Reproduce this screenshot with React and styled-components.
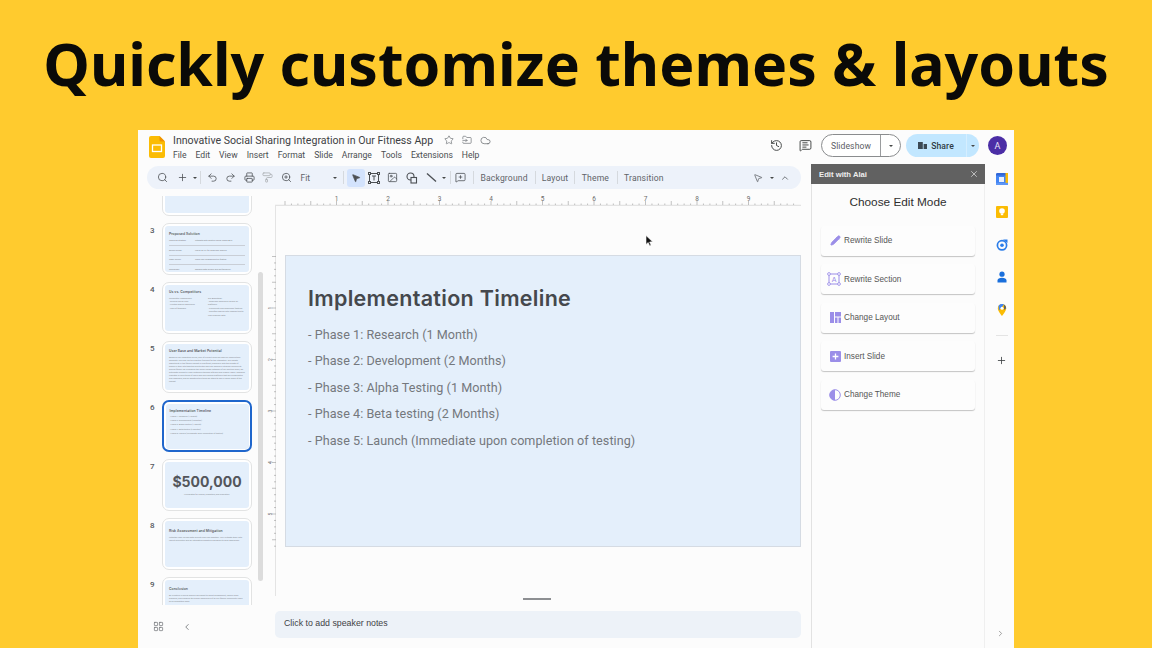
import React from "react";
import styled, { createGlobalStyle } from "styled-components";
import {
  Search, Plus, Undo2, Redo2, Printer, PaintRoller, ZoomIn, MousePointer2, Image as ImageIcon,
  MessageSquarePlus, History, MessageSquareText, Star, FolderInput, Cloud, X, ChevronUp,
  ChevronLeft, ChevronRight, LayoutGrid, Pencil,
} from "lucide-react";

const Global = createGlobalStyle`
  html, body { margin: 0; padding: 0; width: 1152px; height: 648px; overflow: hidden; background: #ffcb2e; }
  * { box-sizing: border-box; }
  body { font-family: "Liberation Sans", Arial, sans-serif; color: #3c4043; }
`;

const Page = styled.div`
  width: 1152px; height: 648px; display: flex; flex-direction: column; align-items: center; background: #ffcb2e;
`;
const Heading = styled.h1`
  margin: 0; height: 130px; line-height: 126px; font-family: "Noto Sans", sans-serif; font-weight: 700;
  font-size: 59px; color: #0a0a08; white-space: nowrap; letter-spacing: 0;
`;
const Window = styled.div`
  width: 876px; height: 518px; background: #fcfcfc; display: grid;
  grid-template-columns: 673px 174px 29px; grid-template-rows: 34px 484px;
`;

/* Header */
const Header = styled.header`
  grid-column: 1 / -1; display: flex; align-items: flex-start; padding: 6px 7px 0 11px;
`;
const Logo = styled.svg` width: 16px; height: 22px; flex: none; margin-right: 8px; `;
const TitleBlock = styled.div` display: flex; flex-direction: column; `;
const TitleRow = styled.div` display: flex; align-items: center; height: 12px; margin-top: -2px; color: #5f6368; `;
const DocTitle = styled.span`
  font-family: "Roboto", sans-serif; font-size: 10.6px; color: #3c4043; margin-right: 11px; white-space: nowrap;
`;
const TitleIcons = styled.div` display: flex; gap: 8px; align-items: center; `;
const MenuBar = styled.nav` display: flex; gap: 9px; margin-top: 4px; `;
const MenuItem = styled.span` font-family: "Roboto", sans-serif; font-size: 8.6px; color: #4a4d50; line-height: 10px; `;
const HeaderRight = styled.div` margin-left: auto; display: flex; align-items: center; height: 23px; margin-top: -2px; `;
const HeaderIcon = styled.span` display: flex; color: #444746; margin-right: ${p => p.$mr}px; `;
const SlideshowPill = styled.div`
  width: 80px; height: 23px; border: 1px solid #8a8c8e; border-radius: 12px; display: flex; background: #fff;
`;
const PillLabel = styled.span`
  flex: 1; display: flex; align-items: center; justify-content: center; font-size: 8.6px; color: #5c6064;
  font-family: "Roboto", sans-serif; gap: 4px; letter-spacing: .1px;
`;
const PillCaret = styled.span`
  width: ${p => p.$w}px; display: flex; align-items: center; justify-content: center; border-left: 1px solid ${p => p.$line};
`;
const SharePill = styled.div`
  width: 73px; height: 23px; border-radius: 12px; background: #c2e7ff; display: flex; margin-left: 5px; color: #1f3a4d;
`;
const ShareLabel = styled(PillLabel)` color: #2f3b44; font-weight: 500; `;
const Avatar = styled.div`
  width: 19px; height: 19px; border-radius: 50%; background: #4b2ea6; color: #e9e4f8; margin-left: 9px;
  display: flex; align-items: center; justify-content: center; font-size: 9px; font-family: "Roboto", sans-serif;
`;
const Caret = styled.i`
  display: block; flex: none; width: 0; height: 0; border-left: 2.5px solid transparent; border-right: 2.5px solid transparent;
  border-top: 2.5px solid #444746;
`;

/* Main */
const Main = styled.main` display: flex; flex-direction: column; padding-top: 2px; min-height: 0; `;
const Toolbar = styled.div`
  margin-left: 9px; width: 654px; height: 23px; border-radius: 12px; background: #edf2fa; display: flex;
  align-items: center; padding: 0 8px 0 5px; flex: none;
`;
const ToolBtn = styled.span`
  width: ${p => p.$w || 18.5}px; height: 18px; flex: none; display: flex; align-items: center; justify-content: center;
  color: ${p => p.$muted ? "#a9adb1" : "#4b4f53"}; border-radius: 3px;
  background: ${p => p.$active ? "#d3e3fd" : "transparent"};
`;
const CaretBtn = styled.span` width: ${p => p.$w || 6}px; flex: none; display: flex; justify-content: center; `;
const ToolSep = styled.span` width: 1px; height: 13px; background: #d5d9de; flex: none; margin: 0 ${p => p.$r ?? 2}px 0 ${p => p.$l ?? 2}px; `;
const FitSelect = styled.span`
  width: 44px; flex: none; display: flex; align-items: center; justify-content: space-between; padding: 0 3px 0 5px;
  font-size: 8.4px; color: #5f6368; font-family: "Roboto", sans-serif;
`;
const TextBtn = styled.span`
  font-family: "Roboto", sans-serif; font-size: 8.6px; color: #5f6368; padding: 0 ${p => p.$px ?? 6.5}px; flex: none; letter-spacing: .15px;
`;
const ToolRight = styled.div` margin-left: auto; display: flex; align-items: center; `;
const Content = styled.div` display: flex; margin-top: 7px; flex: 1; min-height: 0; `;

/* Filmstrip */
const Filmstrip = styled.aside` width: 137px; flex: none; display: flex; flex-direction: column; position: relative; `;
const ThumbScroller = styled.div` height: 409px; overflow: hidden; flex: none; `;
const ThumbList = styled.div` display: flex; flex-direction: column; gap: 7px; margin-top: -32px; padding-left: 12px; `;
const ThumbRow = styled.div` display: flex; height: 52px; `;
const ThumbNumber = styled.span`
  width: 12px; flex: none; font-size: 8px; color: #55585c; font-family: "Roboto", sans-serif; padding-top: 3px; text-align: left; font-weight: 500;
`;
const Thumb = styled.div`
  width: 90px; height: 52px; flex: none; border-radius: 7px; padding: ${p => p.$selected ? "1.5px" : "2px"}; background: #fff;
  border: ${p => p.$selected ? "2px solid #1f66cc" : "1px solid #e2e3e3"}; overflow: hidden;
`;
const ThumbSlide = styled.div`
  height: 100%; background: #e4effb; border-radius: 3px; padding: ${p => p.$pt ?? 5}px ${p => p.$center ? 3 : 4}px 0; overflow: hidden;
  display: flex; flex-direction: column; align-items: ${p => p.$center ? "center" : "stretch"};
`;
const ThumbTitle = styled.div` font-family: "Inter", sans-serif; font-weight: 600; font-size: 3.4px; line-height: 4px; color: #5c5f64; white-space: nowrap; margin-bottom: 2.5px; letter-spacing: .05px; `;
const ThumbLine = styled.div` font-family: "Roboto", sans-serif; font-size: 2.1px; line-height: ${p => p.$lh || 3.4}px; color: #868a90; `;
const ThumbBig = styled.div` font-family: "Inter", sans-serif; font-weight: 700; font-size: 14px; line-height: 22px; color: #53565b; white-space: nowrap; `;
const ThumbCols = styled.div` display: grid; grid-template-columns: 1fr 1fr; gap: 2px; `;
const ThumbTable = styled.div` display: flex; flex-direction: column; margin-top: -2px; `;
const ThumbTableRow = styled.div`
  display: grid; grid-template-columns: 26px 1fr; border-bottom: .5px solid #c9ced6; padding: 2.5px 0 3px; font-family: "Roboto", sans-serif;
  font-size: 2.1px; line-height: 3px; color: #7d8186;
  &:last-child { border-bottom: 0; }
`;
const ThumbBar = styled.div`
  position: absolute; left: 120px; top: 76px; width: 5px; height: 309px; background: #dcdcdc; border-radius: 3px;
`;
const StripFooter = styled.div` height: 43px; flex: none; display: flex; align-items: center; padding: 0 0 0 15px; gap: 18px; color: #5f6368; `;

/* Workspace */
const Workspace = styled.section` width: 526px; flex: none; display: flex; flex-direction: column; margin-top: 1px; `;
const RulerH = styled.svg` display: block; width: 526px; height: 9px; flex: none; overflow: visible; `;
const Stage = styled.div`
  position: relative; height: 390px; flex: none; padding: 49px 0 0 9px; border-left: 1px solid #e4e4e4;
`;
const RulerV = styled.svg` position: absolute; left: -7px; top: 49px; width: 8px; height: 292px; overflow: visible; `;
const Slide = styled.article`
  width: 516px; height: 292px; background: #e4effb; border: 1px solid #d5dbe3; padding: 30px 22px 0;
`;
const SlideTitle = styled.h2`
  margin: 0 0 15px; font-family: "Inter", sans-serif; font-weight: 600; font-size: 21.5px; line-height: 25px; color: #45484d;
  letter-spacing: .3px; white-space: nowrap;
`;
const SlideList = styled.ul` margin: 0; padding: 0; list-style: none; display: flex; flex-direction: column; gap: 8.4px; `;
const SlideLine = styled.li`
  font-family: "Roboto", sans-serif; font-size: 12.6px; line-height: 18px; color: #74787d; white-space: nowrap; letter-spacing: .05px;
`;
const Cursor = styled.svg` position: absolute; left: 369px; top: 29px; width: 9px; height: 12px; `;
const NotesHandle = styled.div` width: 28px; height: 1.5px; background: #8d8f92; margin: 2px auto 0; flex: none; transform: translateX(-1px); `;
const Notes = styled.div`
  height: 27px; margin-top: 11.5px; background: #edf2f8; border-radius: 5px; padding: 0 9px 3px; display: flex; align-items: center;
  font-size: 8.8px; color: #3f4246; flex: none;
`;

/* Panel */
const Panel = styled.section` display: flex; flex-direction: column; border-left: 1px solid #e2e2e2; border-right: 1px solid #efefef; `;
const PanelHead = styled.div`
  height: 20px; background: #616161; color: #eee; display: flex; align-items: center; justify-content: space-between; padding: 0 6px 0 8px;
  font-size: 7.7px; font-weight: 700; margin: 0 -1px 0 -1px; flex: none;
`;
const PanelTitle = styled.div` text-align: center; font-size: 11.8px; color: #2f2f2f; margin-top: 11px; line-height: 14px; `;
const PanelList = styled.div` display: flex; flex-direction: column; gap: 8.5px; padding: 0 9px; margin-top: 16.5px; `;
const ModeCard = styled.div`
  height: 30px; display: flex; align-items: center; padding-left: ${p => p.$pl ?? 9}px; gap: ${p => p.$gap ?? 3}px; background: #fdfdfd; border-radius: 3px;
  box-shadow: 0 1px 1px #c4c4c4; font-size: 8.2px; color: #565656;
`;

/* Rail */
const Rail = styled.aside` display: flex; flex-direction: column; align-items: stretch; padding: 9px 0 0 11px; width: 29px; `;
const RailIcon = styled.svg` width: 12px; height: 12px; display: block; margin-bottom: ${p => p.$mb}px; flex: none; `;
const RailSep = styled.div` width: 12px; height: 1px; background: #e4e4e4; margin: 0 0 19px; flex: none; `;
const RailPlus = styled.span` display: flex; color: #3c4043; `;
const RailBottom = styled.span` margin-top: auto; margin-bottom: 10px; display: flex; color: #777; `;

const slides = [
  { n: null, body: null },
  { n: 3, pt: 6, title: "Proposed Solution", table: [["Technical Strategy","Integrate with existing social media APIs"],["Design Scope","Focus on UX for seamless sharing"],["Team Survey","Track user engagement by feature"],["Challenges","Manage data privacy and performance"]] },
  { n: 4, pt: 5, title: "Us vs. Competitors", cols: [["Competitor Weaknesses:","- Minimal social links","- Limited sharing experience","- Lack of feedback"],["Our Advantage:","- Seamless experience across all platforms","- Community and challenges features","- Gamified sharing with rewards tied to user progress data"]] },
  { n: 5, pt: 5, title: "User Base and Market Potential", para: "Based on our marketing survey, 60% of current users are keen on sharing their workouts. This has led to a positive forecast for the integration. Our growth opportunity in the fitness market is significant, especially with the growth of people in their late twenties and thirties who are seeking a stronger community around fitness. By leveraging the social media networks of our existing users, we anticipate a boost in new customers through referrals and organic reach. Research indicates a rising trend of users who are seeking platforms that are collaborative and rewarding, and by adopting this trend we stand to gain a larger share of the market." },
  { n: 6, pt: 5, selected: true, title: "Implementation Timeline", lines: ["- Phase 1: Research (1 Month)","- Phase 2: Development (2 Months)","- Phase 3: Alpha Testing (1 Month)","- Phase 4: Beta testing (2 Months)","- Phase 5: Launch (Immediate upon completion of testing)"] },
  { n: 7, pt: 9, big: "$500,000", sub: "In allocated for coding, marketing, and promotion." },
  { n: 8, pt: 8, title: "Risk Assessment and Mitigation", para: "Potential risks include data security and user adoption. We'll mitigate them with robust encryption and an integrated marketing campaign to raise awareness." },
  { n: 9, pt: 7, title: "Conclusion", para: "By investing in social sharing we expect to boost engagement, reach a wide audience, and enhance the overall experience of all our fitness community users as a competitive edge." },
];

const ThumbBody = ({ s }) => {
  if (s.big) return (
    <ThumbSlide $center $pt={s.pt}>
      <ThumbBig>{s.big}</ThumbBig>
      <ThumbLine>{s.sub}</ThumbLine>
    </ThumbSlide>
  );
  return (
    <ThumbSlide $pt={s.pt}>
      {s.title && <ThumbTitle>{s.title}</ThumbTitle>}
      {s.table && (
        <ThumbTable>
          {s.table.map(r => (
            <ThumbTableRow key={r[0]}><span>{r[0]}</span><span>{r[1]}</span></ThumbTableRow>
          ))}
        </ThumbTable>
      )}
      {s.cols && (
        <ThumbCols>
          {s.cols.map((c, i) => <div key={i}>{c.map(l => <ThumbLine key={l}>{l}</ThumbLine>)}</div>)}
        </ThumbCols>
      )}
      {s.para && <ThumbLine $lh={3.1}>{s.para}</ThumbLine>}
      {s.lines && s.lines.map(l => <ThumbLine key={l} $lh={4.2}>{l}</ThumbLine>)}
    </ThumbSlide>
  );
};

const hTicks = () => {
  const out = [];
  const step = 51.5 / 8;
  for (let i = 0; i <= 79; i++) {
    const x = 10 + i * step;
    if (x > 524) break;
    const major = i % 4 === 0;
    out.push(<line key={i} x1={x} x2={x} y1={major ? 4 : 6.5} y2={8} stroke="#9a9a9a" strokeWidth=".6" />);
  }
  return out;
};
const vTicks = () => {
  const out = [];
  const step = 51.5 / 8;
  for (let i = 0; i <= 45; i++) {
    const y = 1.5 + i * step;
    const major = i % 4 === 0;
    out.push(<line key={i} y1={y} y2={y} x1={major ? 3 : 5} x2={7} stroke="#9a9a9a" strokeWidth=".6" />);
  }
  return out;
};

const Ic = { size: 11, strokeWidth: 1.7 };
const modeColor = "#9b8ee8";

const RewriteSectionIcon = () => (
  <svg width="14" height="14" viewBox="0 0 14 14" fill="none" stroke={modeColor} strokeWidth="1">
    <rect x="2" y="2" width="10" height="10" />
    <rect x=".7" y=".7" width="2.6" height="2.6" rx="1" fill="#fff" />
    <rect x="10.7" y=".7" width="2.6" height="2.6" rx="1" fill="#fff" />
    <rect x=".7" y="10.7" width="2.6" height="2.6" rx="1" fill="#fff" />
    <rect x="10.7" y="10.7" width="2.6" height="2.6" rx="1" fill="#fff" />
    <text x="7" y="9.6" textAnchor="middle" fontSize="7" fill={modeColor} stroke="none" fontFamily="Liberation Sans">A</text>
  </svg>
);
const LayoutIcon = () => (
  <svg width="11" height="11" viewBox="0 0 11 11" fill={modeColor}>
    <rect x="0" y="0" width="4" height="11" /><rect x="5" y="0" width="6" height="4.5" />
    <rect x="5" y="5.5" width="2.5" height="5.5" /><rect x="8.5" y="5.5" width="2.5" height="5.5" />
  </svg>
);
const InsertIcon = () => (
  <svg width="11" height="11" viewBox="0 0 11 11">
    <rect width="11" height="11" rx="1" fill={modeColor} />
    <path d="M5.5 2.6v5.8M2.6 5.5h5.8" stroke="#fff" strokeWidth="1.3" />
  </svg>
);
const ThemeIcon = () => (
  <svg width="12" height="12" viewBox="0 0 12 12">
    <circle cx="6" cy="6" r="5.3" fill="none" stroke={modeColor} />
    <path d="M6 .7a5.3 5.3 0 0 0 0 10.6z" fill={modeColor} />
  </svg>
);

export default function App() {
  return (
    <Page>
      <Global />
      <Heading>Quickly customize themes &amp; layouts</Heading>
      <Window>
        <Header>
          <Logo viewBox="0 0 16 22">
            <path d="M2 0h8.5L16 5.5V20a2 2 0 0 1-2 2H2a2 2 0 0 1-2-2V2a2 2 0 0 1 2-2z" fill="#fbbc04" />
            <path d="M10.5 0L16 5.5h-4a1.5 1.5 0 0 1-1.5-1.5z" fill="#f09300" />
            <rect x="3.5" y="9" width="9" height="6.5" fill="none" stroke="#fff" strokeWidth="1.3" />
          </Logo>
          <TitleBlock>
            <TitleRow>
              <DocTitle>Innovative Social Sharing Integration in Our Fitness App</DocTitle>
              <TitleIcons>
                <Star size={10} strokeWidth={1.5} />
                <FolderInput size={10} strokeWidth={1.5} />
                <Cloud size={11} strokeWidth={1.5} />
              </TitleIcons>
            </TitleRow>
            <MenuBar>
              {["File","Edit","View","Insert","Format","Slide","Arrange","Tools","Extensions","Help"].map(m => <MenuItem key={m}>{m}</MenuItem>)}
            </MenuBar>
          </TitleBlock>
          <HeaderRight>
            <HeaderIcon $mr={16}><History size={13} strokeWidth={1.8} /></HeaderIcon>
            <HeaderIcon $mr={9}><MessageSquareText size={13} strokeWidth={1.8} /></HeaderIcon>
            <SlideshowPill>
              <PillLabel>Slideshow</PillLabel>
              <PillCaret $w={20} $line="#9a9c9e"><Caret /></PillCaret>
            </SlideshowPill>
            <SharePill>
              <ShareLabel>
                <svg width="9" height="9" viewBox="0 0 9 9" fill="#3c4a55"><path d="M0 1h4.8v7H0zM5.6 3H9v5H5.6z" /></svg>
                Share
              </ShareLabel>
              <PillCaret $w={13} $line="#d5eeff"><Caret /></PillCaret>
            </SharePill>
            <Avatar>A</Avatar>
          </HeaderRight>
        </Header>

        <Main>
          <Toolbar>
            <ToolBtn $w={20}><Search {...Ic} /></ToolBtn>
            <ToolBtn $w={20}><Plus {...Ic} /></ToolBtn>
            <CaretBtn $w={5}><Caret /></CaretBtn>
            <ToolSep $l={3} $r={2} />
            <ToolBtn><Undo2 {...Ic} /></ToolBtn>
            <ToolBtn><Redo2 {...Ic} /></ToolBtn>
            <ToolBtn><Printer {...Ic} /></ToolBtn>
            <ToolBtn $muted><PaintRoller {...Ic} /></ToolBtn>
            <ToolBtn><ZoomIn {...Ic} /></ToolBtn>
            <FitSelect>Fit<Caret /></FitSelect>
            <ToolSep $l={3} $r={3} />
            <ToolBtn $active $w={18}><MousePointer2 size={10} strokeWidth={1.7} fill="#4b4f53" /></ToolBtn>
            <ToolBtn $w={18}>
              <svg width="12" height="12" viewBox="0 0 12 12" fill="none" stroke="#4b4f53" strokeWidth="1">
                <rect x="1.5" y="1.5" width="9" height="9" />
                <rect x=".5" y=".5" width="2" height="2" fill="#edf2fa" /><rect x="9.5" y=".5" width="2" height="2" fill="#edf2fa" />
                <rect x=".5" y="9.5" width="2" height="2" fill="#edf2fa" /><rect x="9.5" y="9.5" width="2" height="2" fill="#edf2fa" />
                <path d="M4 4h4M6 4v4.5" />
              </svg>
            </ToolBtn>
            <ToolBtn $w={20}><ImageIcon {...Ic} /></ToolBtn>
            <ToolBtn $w={19}>
              <svg width="12" height="12" viewBox="0 0 12 12" fill="none" stroke="#4b4f53" strokeWidth="1.1">
                <circle cx="4.5" cy="4.5" r="3.5" /><rect x="5" y="5.5" width="5.5" height="5.5" fill="#edf2fa" />
              </svg>
            </ToolBtn>
            <ToolBtn $w={19}>
              <svg width="11" height="11" viewBox="0 0 11 11"><path d="M1 1.5l9 8" stroke="#4b4f53" strokeWidth="1.4" /></svg>
            </ToolBtn>
            <CaretBtn><Caret /></CaretBtn>
            <ToolSep $l={3} $r={1} />
            <ToolBtn $w={18}><MessageSquarePlus {...Ic} /></ToolBtn>
            <ToolSep $l={3} $r={0} />
            <TextBtn $px={7}>Background</TextBtn>
            <ToolSep $l={0} $r={0} />
            <TextBtn $px={6}>Layout</TextBtn>
            <ToolSep $l={0} $r={0} />
            <TextBtn $px={6.5}>Theme</TextBtn>
            <ToolSep $l={1} $r={0} />
            <TextBtn>Transition</TextBtn>
            <ToolRight>
              <ToolBtn $w={18}><MousePointer2 size={10} strokeWidth={1.6} /></ToolBtn>
              <CaretBtn $w={10}><Caret /></CaretBtn>
              <ToolBtn $w={16}><ChevronUp size={10} strokeWidth={1.8} /></ToolBtn>
            </ToolRight>
          </Toolbar>

          <Content>
            <Filmstrip>
              <ThumbScroller>
                <ThumbList>
                  {slides.map((s, i) => (
                    <ThumbRow key={i}>
                      <ThumbNumber>{s.n}</ThumbNumber>
                      <Thumb $selected={s.selected}><ThumbBody s={s} /></Thumb>
                    </ThumbRow>
                  ))}
                </ThumbList>
              </ThumbScroller>
              <ThumbBar />
              <StripFooter>
                <LayoutGrid size={11} strokeWidth={1.4} />
                <ChevronLeft size={10} strokeWidth={1.8} />
              </StripFooter>
            </Filmstrip>

            <Workspace>
              <RulerH viewBox="0 0 526 9">
                <line x1="0" x2="526" y1="8.3" y2="8.3" stroke="#cfcfcf" strokeWidth=".7" />
                {hTicks()}
                {[1,2,3,4,5,6,7,8,9].map(n => (
                  <text key={n} x={10 + n * 51.5} y="4" fontSize="6.5" textAnchor="middle" fill="#6a6a6a" fontFamily="Roboto">{n}</text>
                ))}
              </RulerH>
              <Stage>
                <RulerV viewBox="0 0 8 292">
                  {vTicks()}
                  {[1,2,3,4,5].map(n => {
                    const y = 1.5 + n * 51.5;
                    return <text key={n} x="1" y={y} fontSize="5" textAnchor="middle" dominantBaseline="central" fill="#6a6a6a" fontFamily="Roboto" transform={`rotate(-90 1 ${y})`}>{n}</text>;
                  })}
                </RulerV>
                <Slide>
                  <SlideTitle>Implementation Timeline</SlideTitle>
                  <SlideList>
                    {slides[4].lines.map(l => <SlideLine key={l}>{l}</SlideLine>)}
                  </SlideList>
                </Slide>
                <Cursor viewBox="0 0 9 12">
                  <path d="M1 0.5v9l2.2-2 1.5 3.4 1.4-.6-1.5-3.3 3-.2z" fill="#111" stroke="#fff" strokeWidth=".6" />
                </Cursor>
              </Stage>
              <NotesHandle />
              <Notes>Click to add speaker notes</Notes>
            </Workspace>
          </Content>
        </Main>

        <Panel>
          <PanelHead>
            <span>Edit with Alai</span>
            <X size={10} strokeWidth={1.5} color="#f2f2f2" />
          </PanelHead>
          <PanelTitle>Choose Edit Mode</PanelTitle>
          <PanelList>
            <ModeCard $pl={9}><Pencil size={11} strokeWidth={2} color={modeColor} fill={modeColor} />Rewrite Slide</ModeCard>
            <ModeCard $pl={6} $gap={3}><RewriteSectionIcon />Rewrite Section</ModeCard>
            <ModeCard $pl={9} $gap={3}><LayoutIcon />Change Layout</ModeCard>
            <ModeCard $pl={9} $gap={3}><InsertIcon />Insert Slide</ModeCard>
            <ModeCard $pl={8} $gap={3}><ThemeIcon />Change Theme</ModeCard>
          </PanelList>
        </Panel>

        <Rail>
          <RailIcon $mb={21} viewBox="0 0 12 12">
            <rect width="12" height="12" rx="1.5" fill="#4285f4" />
            <path d="M0 2.5h12V1.5A1.5 1.5 0 0 0 10.5 0h-9A1.5 1.5 0 0 0 0 1.5z" fill="#3367d6" />
            <rect x="9.5" y="0" width="2.5" height="12" fill="#fbbc04" />
            <rect x="0" y="9.8" width="12" height="2.2" fill="#5e97f6" />
            <rect x="3" y="4" width="5" height="5" fill="#e8f0fe" />
          </RailIcon>
          <RailIcon $mb={21} viewBox="0 0 12 12">
            <rect width="12" height="12" rx="1" fill="#fbbc04" />
            <circle cx="6" cy="5" r="2.8" fill="#fff" />
            <rect x="4.8" y="7.6" width="2.4" height="1.6" fill="#fff" />
          </RailIcon>
          <RailIcon $mb={20} viewBox="0 0 12 12">
            <circle cx="6" cy="6.3" r="4.6" fill="none" stroke="#2b7de9" strokeWidth="1.7" />
            <circle cx="6" cy="6.3" r="1.8" fill="#2b7de9" />
            <path d="M7 .5h4.5V4z" fill="#2b7de9" />
          </RailIcon>
          <RailIcon $mb={21} viewBox="0 0 12 12">
            <circle cx="6" cy="3.2" r="2.6" fill="#1a6fdc" />
            <path d="M1.5 11.5V9.4C1.5 7.6 3.5 6.7 6 6.7s4.5.9 4.5 2.7v2.1z" fill="#1a6fdc" />
          </RailIcon>
          <RailIcon $mb={19} viewBox="0 0 12 12">
            <path d="M6 0a4.2 4.2 0 0 0-4.2 4.2C1.8 7 6 12 6 12s4.2-5 4.2-7.800A4.2 4.2 0 0 0 6 0z" fill="#fbbc04" />
            <path d="M2.6 1.8A4.2 4.2 0 0 1 8 .5L3 6.6z" fill="#4285f4" />
            <path d="M8 .5a4.2 4.2 0 0 1 2.2 3.7L8 6z" fill="#5f6368" />
            <circle cx="6" cy="4.2" r="1.5" fill="#fff" />
          </RailIcon>
          <RailSep />
          <RailPlus><Plus size={11} strokeWidth={1.8} /></RailPlus>
          <RailBottom><ChevronRight size={9} strokeWidth={1.8} /></RailBottom>
        </Rail>
      </Window>
    </Page>
  );
}
